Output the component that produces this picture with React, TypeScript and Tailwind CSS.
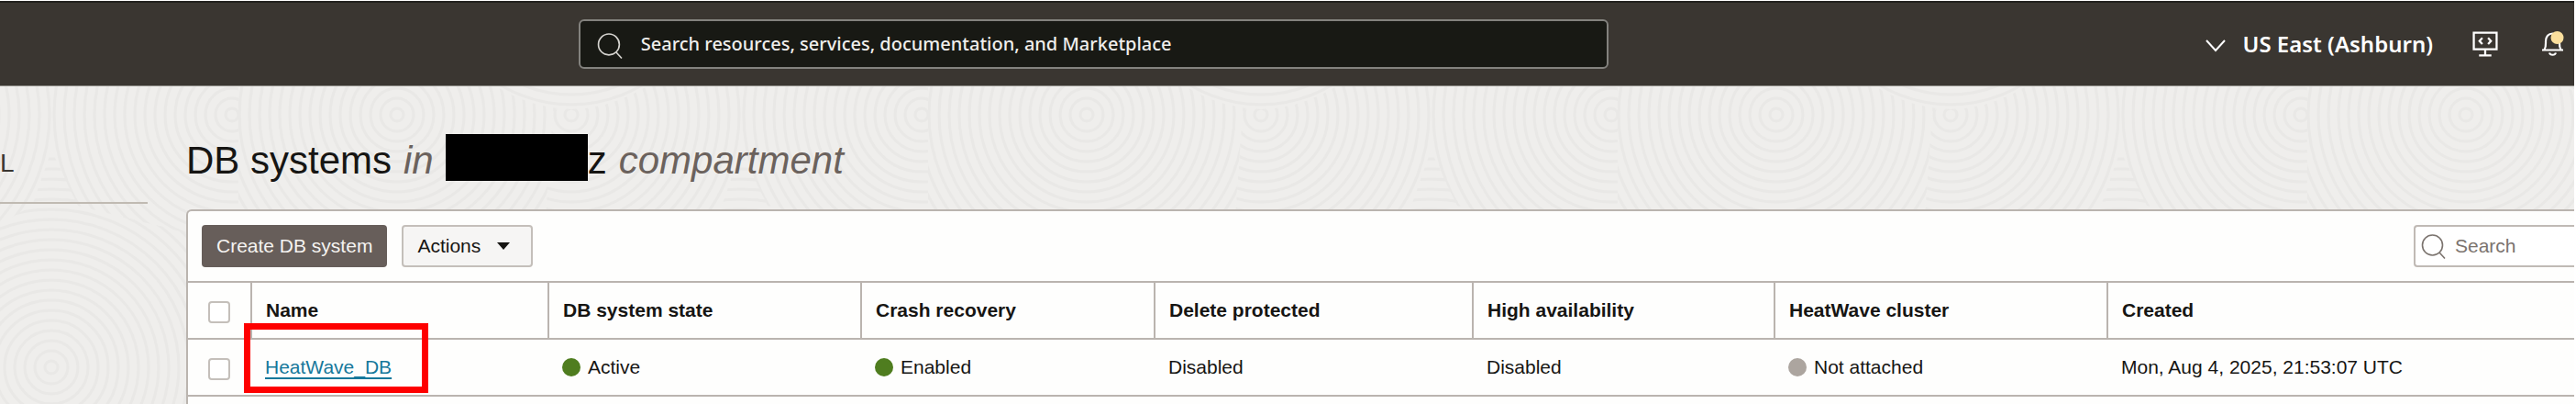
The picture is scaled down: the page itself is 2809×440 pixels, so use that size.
import React from "react";

const columns = [
  { label: "Name", width: "w-[324px]" },
  { label: "DB system state", width: "w-[341px]" },
  { label: "Crash recovery", width: "w-[320px]" },
  { label: "Delete protected", width: "w-[347px]" },
  { label: "High availability", width: "w-[329px]" },
  { label: "HeatWave cluster", width: "w-[363px]" },
  { label: "Created", width: "" },
];

type RegionProps = { id: string; area: string; cx: number; cy: number; count: number };

function RingRegion({ id, area, cx, cy, count }: RegionProps) {
  return (
    <g clipPath={`url(#${id})`}>
      <clipPath id={id}>
        <path d={area} />
      </clipPath>
      <path d={area} fill="#efeeec" stroke="none" />
      {Array.from({ length: count }, (_, i) => (
        <circle key={i} cx={cx} cy={cy} r={(i + 1) * 11 - 4} />
      ))}
    </g>
  );
}

const spread = "M603 28L640 0H808V70L785 136L840 346H560L595 140Z";

function Texture() {
  return (
    <svg aria-hidden="true" className="absolute inset-0 h-full w-full">
      <defs>
        <pattern id="texture" width="752" height="346" patternUnits="userSpaceOnUse">
          <g fill="none" stroke="#e9e8e6" strokeWidth="3">
            <RingRegion id="ring-c" area={spread} cx={623} cy={31} count={36} />
            <g transform="translate(-752 0)">
              <RingRegion id="ring-c2" area={spread} cx={623} cy={31} count={36} />
            </g>
            <RingRegion id="ring-b" area="M260 0H640L603 28L595 140L560 346H240Z" cx={433} cy={31} count={36} />
            <RingRegion id="ring-d" area="M56 70L90 125L260 165V346H0V150L35 130Z" cx={56} cy={306} count={30} />
            <RingRegion id="ring-a" area="M56 0H260V165L205 160L85 130L56 70Z" cx={253} cy={31} count={30} />
            <RingRegion id="ring-e" area="M540 0H706Q623 50 540 0Z" cx={623} cy={-130} count={16} />
          </g>
        </pattern>
      </defs>
      <rect width="100%" height="100%" fill="url(#texture)" />
    </svg>
  );
}

function SearchIcon({ className }: { className: string }) {
  return (
    <svg viewBox="0 0 27 27" fill="none" stroke="currentColor" className={className} aria-hidden="true">
      <circle cx="12.500" cy="12" r="11" strokeWidth="1.600" />
      <path d="M20 20l6 6.500" strokeWidth="1.600" />
    </svg>
  );
}

function Status({ color, children }: { color: string; children: React.ReactNode }) {
  return (
    <span className="flex items-center gap-2">
      <span className={`size-5 rounded-full ${color}`} />
      {children}
    </span>
  );
}

function Check({ label }: { label: string }) {
  return (
    <input
      type="checkbox"
      aria-label={label}
      className="mt-1 block size-6 appearance-none rounded border-2 border-[#c4bfba] bg-white"
    />
  );
}

export default function App() {
  return (
    <div className="flex min-h-screen flex-col overflow-hidden border-t border-r-2 border-white bg-[#efeeec] font-['Liberation_Sans',Arial,sans-serif] text-[#161513]">
      <header className="flex h-[93px] items-center border-t-2 border-b border-t-[#22211e] border-b-[#8a8883] bg-[#3a3631] font-['Noto_Sans','Open_Sans',sans-serif]">
        <div className="flex-1" />
        <label className="flex h-[54px] w-2/5 items-center gap-5 rounded-md border-2 border-[#83827e] bg-[#181914] pl-[18px] text-[#d5d3cf]">
          <SearchIcon className="mt-1 size-7 shrink-0" />
          <input
            aria-label="Search resources"
            placeholder="Search resources, services, documentation, and Marketplace"
            className="min-w-0 flex-1 bg-transparent text-[20px] font-medium outline-none placeholder:text-[#efeeec]"
          />
        </label>
        <div className="flex flex-[1.67] items-center justify-end">
          <button className="flex items-center gap-[18px] text-[24px] font-semibold text-white">
            <svg viewBox="0 0 22 14" fill="none" stroke="currentColor" strokeWidth="2" className="mt-1 h-[14px] w-[22px]" aria-hidden="true">
              <path d="M1 1l10 11L21 1" />
            </svg>
            US East (Ashburn)
          </button>
          <button aria-label="Developer tools" className="ml-[43px] text-white">
            <svg viewBox="0 0 27 27" fill="none" stroke="currentColor" strokeWidth="2.200" className="size-7" aria-hidden="true">
              <path d="M1.500 1.500h24v17.500h-24zM13.500 19v6M7 25.500h13M10.500 7l-3 3.300 3 3.300M16.500 7l3 3.300-3 3.300" />
            </svg>
          </button>
          <button aria-label="Notifications" className="mr-[10px] ml-[47px] text-white">
            <svg viewBox="0 0 26 28" fill="none" stroke="currentColor" strokeWidth="2.200" className="h-7 w-[26px]" aria-hidden="true">
              <path d="M1 20.500h23M3.500 20C5.500 17 5 14 5 11C5 5.500 8 2.500 12.500 2.500S20 5.500 20 11C20 14 19.500 17 21.500 20M9 23.500c1 3 6 3 7 0" />
              <circle cx="17.500" cy="7" r="7" fill="#fbdf9d" stroke="none" />
            </svg>
          </button>
        </div>
      </header>

      <div className="relative flex flex-1">
        <Texture />
        <aside className="relative w-[161px] shrink-0">
          <div className="h-[128px] border-b-2 border-[#c0bab2] pt-[66px] text-[28px] leading-9 text-[#3a3631]">L</div>
        </aside>
        <main className="relative ml-[42px] flex min-w-0 flex-1 flex-col">
          <h1 className="flex h-[134px] items-center gap-[13px] pt-7 text-[42px] leading-none">
            <span>DB systems</span>
            <em className="text-[#6b625d]">in</em>
            <span className="flex items-center">
              <span className="mb-2 h-[51px] w-[155px] bg-black" />
              z
            </span>
            <em className="text-[#6b625d]">compartment</em>
          </h1>

          <section className="flex-1 rounded-tl-md border-t-2 border-l-2 border-[#bab4af] bg-[#fefefd] text-[21px]">
            <div className="flex items-center gap-4 py-[15px] pl-[15px]">
              <button className="h-[46px] rounded bg-[#675e5a] px-4 text-[#f5f3f1]">Create DB system</button>
              <button className="flex h-[46px] items-center gap-[18px] rounded border-2 border-[#c4bfba] bg-[#f6f5f4] px-[15px]">
                Actions
                <svg viewBox="0 0 14 8" className="mr-2 h-2 w-[14px]" aria-hidden="true"><path d="M0 0h14L7 8z" fill="#161513" /></svg>
              </button>
              <label className="ml-auto flex h-[46px] w-[175px] items-center gap-2.5 rounded-l border-y-2 border-l-2 border-[#c0bab5] bg-white pl-[6px] text-[#7b736e]">
                <SearchIcon className="size-[27px] shrink-0" />
                <input aria-label="Search" placeholder="Search" className="min-w-0 flex-1 bg-transparent outline-none placeholder:text-[#7b736e]" />
              </label>
            </div>
            <table className="w-full table-fixed border-collapse text-left">
              <thead>
                <tr className="h-[62px] border-y-2 border-[#bab4af]">
                  <th className="w-[69px] pl-[22px]"><Check label="Select all" /></th>
                  {columns.map((c) => (
                    <th key={c.label} className={`border-l-2 border-[#bab4af] pl-[15px] font-bold ${c.width}`}>{c.label}</th>
                  ))}
                </tr>
              </thead>
              <tbody>
                <tr className="h-[62px] border-b-2 border-[#bab4af]">
                  <td className="pl-[22px]"><Check label="Select HeatWave_DB" /></td>
                  <td className="relative pl-[15px]">
                    <a href="#heatwave" className="text-[#16789b] underline underline-offset-4">HeatWave_DB</a>
                    <span className="pointer-events-none absolute -top-[18px] -left-2 h-[76px] w-[201px] border-[7px] border-[#fe0000]" />
                  </td>
                  <td className="pl-[15px]"><Status color="bg-[#4f7d1f]">Active</Status></td>
                  <td className="pl-[15px]"><Status color="bg-[#4f7d1f]">Enabled</Status></td>
                  <td className="pl-[15px]">Disabled</td>
                  <td className="pl-[15px]">Disabled</td>
                  <td className="pl-[15px]"><Status color="bg-[#aca59f]">Not attached</Status></td>
                  <td className="pl-[15px]">Mon, Aug 4, 2025, 21:53:07 UTC</td>
                </tr>
              </tbody>
            </table>
          </section>
        </main>
      </div>
    </div>
  );
}
